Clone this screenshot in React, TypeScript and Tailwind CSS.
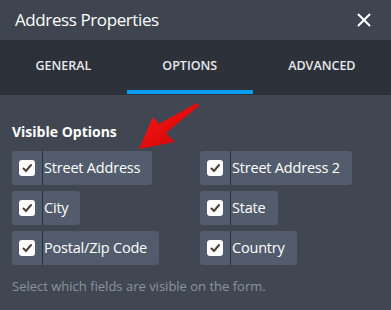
import { X } from 'lucide-react';

const options = [
  ['Street Address', 'Street Address 2'],
  ['City', 'State'],
  ['Postal/Zip Code', 'Country'],
];

function CheckItem({ label }: { label: string }) {
  return (
    <div className="flex items-stretch h-[34px] rounded-[3px] bg-[#525c6c] justify-self-start">
      <div className="flex items-center pl-[7px] pr-[7px]">
        <div className="w-4 h-4 rounded-[3px] bg-white flex items-center justify-center">
          <svg width="12" height="12" viewBox="0 0 12 12">
            <path d="M2.5 6.5 L5 9 L10 3" fill="none" stroke="#4a4038" strokeWidth="2" strokeLinecap="round" />
          </svg>
        </div>
      </div>
      <div className="w-px bg-[#2a2f37]" />
      <span className="flex items-center pl-[1px] pr-3 text-[14.5px] tracking-[-0.2px] text-white">{label}</span>
    </div>
  );
}

export default function App() {
  const tabs = ['GENERAL', 'OPTIONS', 'ADVANCED'];
  return (
    <div className="w-[391px] h-[310px] bg-[#404752] relative overflow-hidden" style={{ fontFamily: '"Open Sans", "Noto Sans", sans-serif' }}>
      <div className="h-10 flex items-center justify-between pl-[15px] pr-4 bg-[#3e4550]">
        <span className="text-[17px] tracking-[-0.4px] text-white">Address Properties</span>
        <X size={22} strokeWidth={2.2} className="text-white" />
      </div>
      <div className="h-[55px] flex bg-[#2d3139]">
        {tabs.map((t) => (
          <div key={t} className="flex-auto flex flex-col">
            <div className="flex-1 flex items-center justify-center text-[12.5px] font-semibold text-[#e8eaee] pt-[2px]">{t}</div>
            <div className={t === 'OPTIONS' ? 'h-1 bg-[#0a9ef0] mb-px' : 'h-1 mb-px'} />
          </div>
        ))}
      </div>
      <div className="px-3 pt-[27px]">
        <h3 className="text-[14px] font-bold text-white leading-5 mb-[9px]">Visible Options</h3>
        <div className="grid grid-cols-[188px_1fr] gap-y-[6px]">
          {options.flat().map((o) => (
            <CheckItem key={o} label={o} />
          ))}
        </div>
        <p className="mt-[12px] text-[13px] text-[#8b93a0]">Select which fields are visible on the form.</p>
      </div>
      <svg className="absolute left-0 top-0 pointer-events-none" width="391" height="310">
        <defs>
          <linearGradient id="ar" x1="0" y1="0" x2="1" y2="1">
            <stop offset="0" stopColor="#ff1a1a" />
            <stop offset="1" stopColor="#c80000" />
          </linearGradient>
        </defs>
        <path d="M139 149 L153 117 L159 124 L197 103 L199 106 L166 133 L175 142 Z" fill="url(#ar)" />
      </svg>
    </div>
  );
}
